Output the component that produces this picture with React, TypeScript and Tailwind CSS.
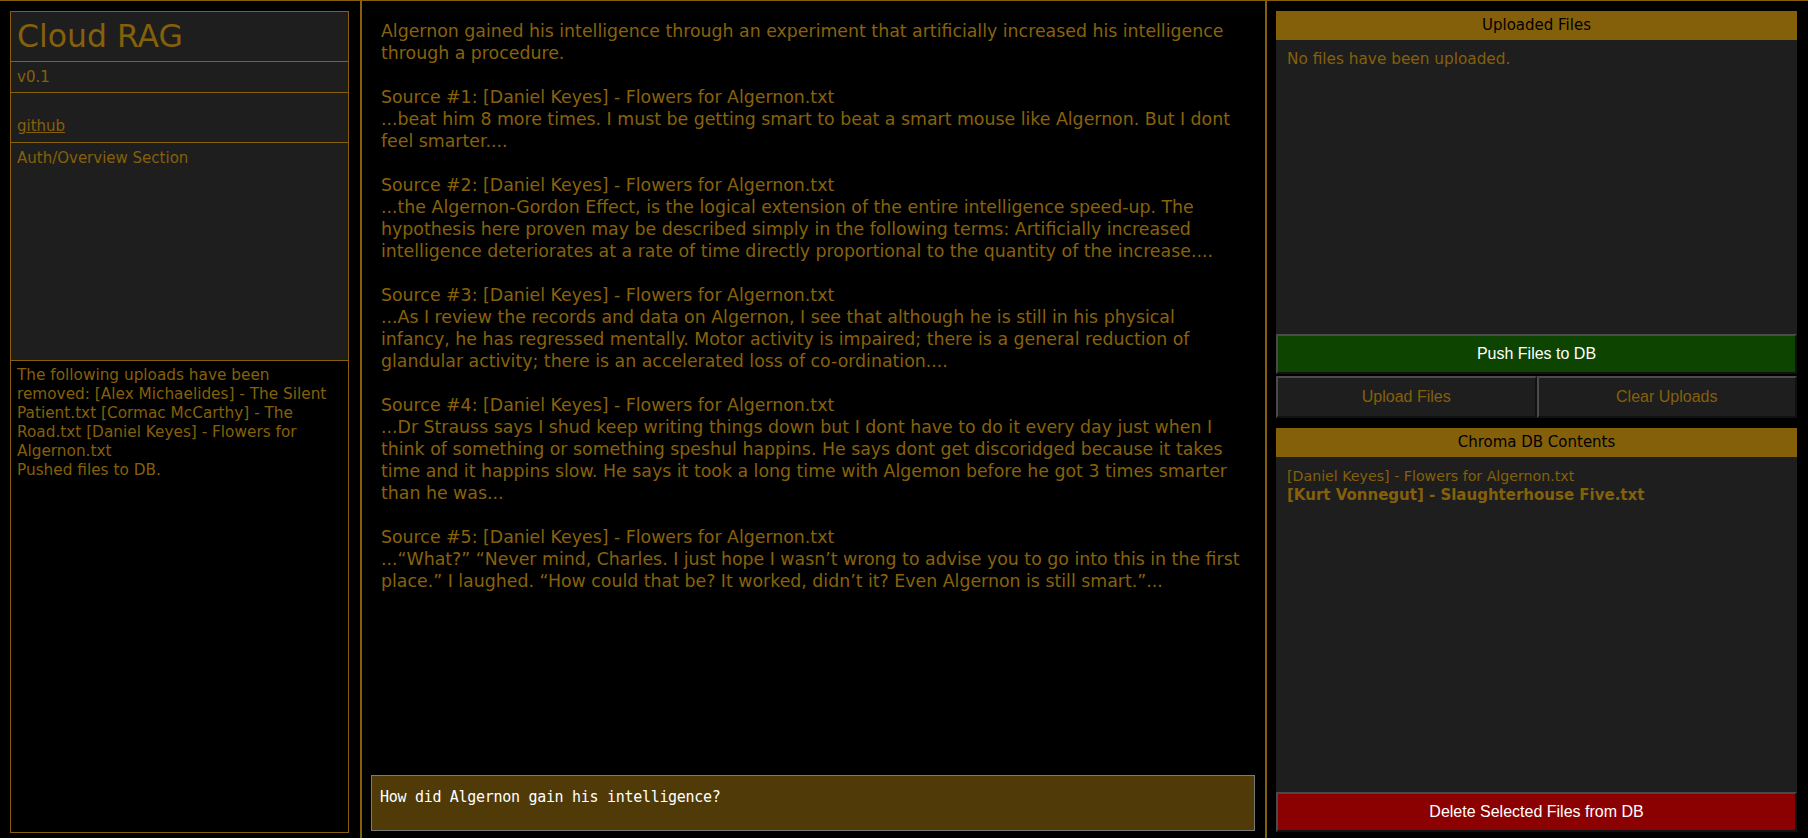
import React from "react";

const sans = "font-['DejaVu_Sans',sans-serif]";
const arial = "font-['Liberation_Sans',Arial,sans-serif]";

const answer = `Algernon gained his intelligence through an experiment that artificially increased his intelligence through a procedure.

Source #1: [Daniel Keyes] - Flowers for Algernon.txt
...beat him 8 more times. I must be getting smart to beat a smart mouse like Algernon. But I dont feel smarter....

Source #2: [Daniel Keyes] - Flowers for Algernon.txt
...the Algernon-Gordon Effect, is the logical extension of the entire intelligence speed-up. The hypothesis here proven may be described simply in the following terms: Artificially increased intelligence deteriorates at a rate of time directly proportional to the quantity of the increase....

Source #3: [Daniel Keyes] - Flowers for Algernon.txt
...As I review the records and data on Algernon, I see that although he is still in his physical infancy, he has regressed mentally. Motor activity is impaired; there is a general reduction of glandular activity; there is an accelerated loss of co-ordination....

Source #4: [Daniel Keyes] - Flowers for Algernon.txt
...Dr Strauss says I shud keep writing things down but I dont have to do it every day just when I think of something or something speshul happins. He says dont get discoridged because it takes time and it happins slow. He says it took a long time with Algemon before he got 3 times smarter than he was...

Source #5: [Daniel Keyes] - Flowers for Algernon.txt
...\u201CWhat?\u201D \u201CNever mind, Charles. I just hope I wasn\u2019t wrong to advise you to go into this in the first place.\u201D I laughed. \u201CHow could that be? It worked, didn\u2019t it? Even Algernon is still smart.\u201D...`;

const btn =
  "border-2 border-t-[#4a4a4a] border-l-[#4a4a4a] border-b-[#111] border-r-[#111] text-[16px] " +
  arial;

export default function App() {
  return (
    <div className={`h-screen flex bg-black border-t border-[#86600a] overflow-hidden ${sans}`}>
      {/* left column */}
      <div className="w-[362px] shrink-0 border-r-2 border-[#86600a] pl-[10px] pr-[11px] pt-[10px] pb-[5px] flex flex-col">
        <div className="border border-[#86600a] bg-[#1e1e1e] h-[51px] px-[6px] flex items-center">
          <span className="text-[31.5px] leading-none text-[#85600a]">Cloud RAG</span>
        </div>
        <div className="border border-t-0 border-[#86600a] bg-[#1e1e1e] h-[31px] px-[6px] flex items-center text-[15px] text-[#85600a]">
          v0.1
        </div>
        <div className="border border-t-0 border-[#86600a] bg-[#1e1e1e] h-[50px] px-[6px] pt-[24px] text-[15px] leading-[19px] text-[#85600a]">
          <a href="#" className="underline">
            github
          </a>
        </div>
        <div className="border border-t-0 border-[#86600a] bg-[#1e1e1e] h-[218px] px-[6px] pt-[6px] text-[15px] leading-[19px] text-[#85600a]">
          Auth/Overview Section
        </div>
        <div className="flex-1 border border-t-0 border-[#86600a] bg-black px-[6px] pt-[5px] text-[15.3px] leading-[19px] text-[#85600a]">
          <div>
            The following uploads have been removed: [Alex Michaelides] - The Silent Patient.txt [Cormac McCarthy] - The
            Road.txt [Daniel Keyes] - Flowers for Algernon.txt
          </div>
          <div>Pushed files to DB.</div>
        </div>
      </div>

      {/* center column */}
      <div className="flex-1 min-w-0 flex flex-col border-r-2 border-[#86600a]">
        <div className="flex-1 overflow-hidden pl-[19px] pr-[20px] pt-[19px] text-[17.35px] leading-[22px] text-[#88630c] whitespace-pre-wrap">
          {answer}
        </div>
        <div className="pl-[9px] pr-[10px] pb-[7px]">
          <textarea
            className="block w-full h-[56px] resize-none bg-[#4f3a08] border border-[#7a7a7a] text-white text-[15px] leading-[18px] px-[8px] pt-[12px] font-['DejaVu_Sans_Mono',monospace] tracking-[-0.3px] outline-none"
            defaultValue="How did Algernon gain his intelligence?"
          />
        </div>
      </div>

      {/* right column */}
      <div className="w-[541px] shrink-0 pl-[9px] pr-[11px] pt-[10px] pb-[6px] flex flex-col">
        <div className="bg-[#85600a] h-[29px] flex items-center justify-center text-[15px] text-black">
          Uploaded Files
        </div>
        <div className="h-[294px] bg-[#1e1e1e] px-[11px] pt-[10px] text-[15.3px] leading-[19px] text-[#85600a]">
          No files have been uploaded.
        </div>
        <button className={`h-[40px] bg-[#0c4400] text-white ${btn}`}>Push Files to DB</button>
        <div className="flex mt-[2px]">
          <button className={`flex-1 h-[42px] bg-[#1e1e1e] text-[#85600a] ${btn}`}>Upload Files</button>
          <button className={`flex-1 h-[42px] bg-[#1e1e1e] text-[#85600a] ${btn}`}>Clear Uploads</button>
        </div>
        <div className="mt-[10px] bg-[#85600a] h-[29px] flex items-center justify-center text-[15px] text-black">
          Chroma DB Contents
        </div>
        <div className="flex-1 bg-[#1e1e1e] px-[11px] pt-[10px] text-[15px] leading-[19px] text-[#85600a]">
          <div className="text-[14.2px]">[Daniel Keyes] - Flowers for Algernon.txt</div>
          <div className="font-bold">[Kurt Vonnegut] - Slaughterhouse Five.txt</div>
        </div>
        <button className={`h-[40px] bg-[#8b0000] text-white ${btn}`}>Delete Selected Files from DB</button>
      </div>
    </div>
  );
}
